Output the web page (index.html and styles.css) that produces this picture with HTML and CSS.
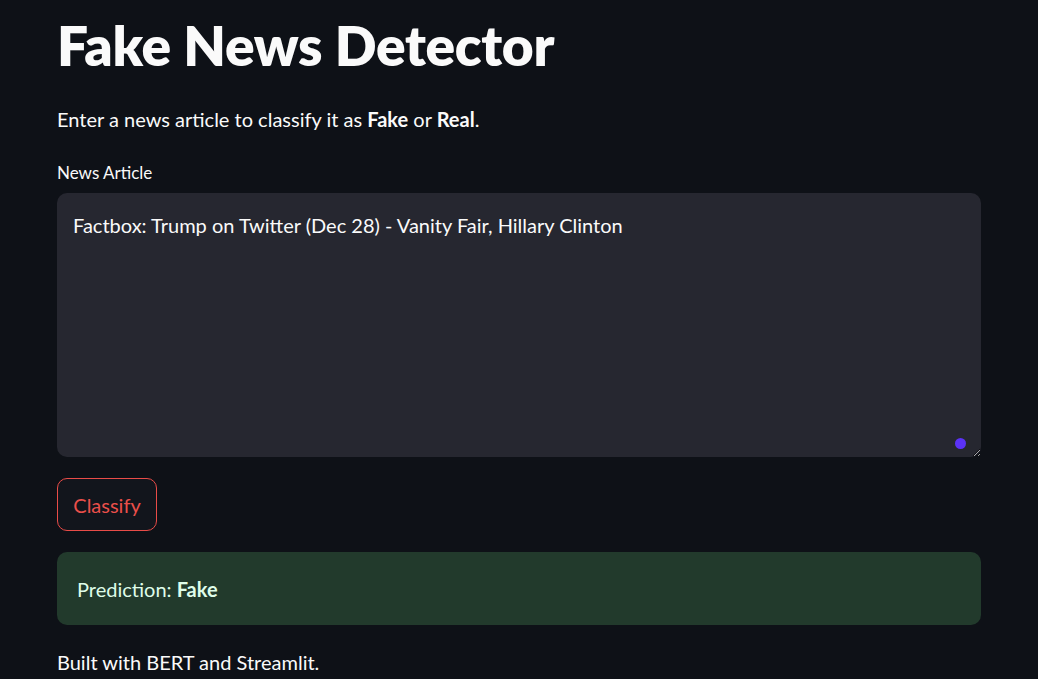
FILE: index.html
```html
<!DOCTYPE html>
<html lang="en">
<head>
<meta charset="utf-8">
<title>Fake News Detector</title>
<link rel="stylesheet" href="styles.css">
</head>
<body>
<main class="main">
  <h1 class="title">Fake News Detector</h1>
  <p class="intro">Enter a news article to classify it as <strong>Fake</strong> or <strong>Real</strong>.</p>
  <label class="label" for="article">News Article</label>
  <div class="area-wrap">
    <textarea id="article" class="area">Factbox: Trump on Twitter (Dec 28) - Vanity Fair, Hillary Clinton</textarea>
    <span class="dot"></span>
  </div>
  <button class="btn" type="button">Classify</button>
  <div class="alert">Prediction: <strong>Fake</strong></div>
  <p class="footer">Built with BERT and Streamlit.</p>
</main>
</body>
</html>
```
FILE: styles.css
```css
html, body {
  margin: 0;
  padding: 0;
  background: #0e1117;
  color: #fafafa;
  font-family: Lato, "Noto Sans", sans-serif;
  overflow: hidden;
  color-scheme: dark;
}
.main {
  width: 924px;
  margin-left: 57px;
  display: flex;
  flex-direction: column;
  align-items: flex-start;
}
.title {
  margin: 0;
  padding-top: 10px;
  font-size: 55px;
  line-height: 70px;
  font-weight: 800;
  letter-spacing: -0.3px;
}
.intro {
  margin: 23px 0 0;
  font-size: 20px;
  line-height: 32px;
}
.intro strong { font-weight: 700; }
.label {
  margin-top: 26px;
  font-size: 17px;
  line-height: 24px;
}
.area-wrap {
  position: relative;
  margin-top: 8px;
  width: 924px;
  height: 264px;
}
.area {
  box-sizing: border-box;
  width: 924px;
  height: 264px;
  border: none;
  outline: none;
  border-radius: 10px;
  background: #262730;
  color: #fafafa;
  padding: 17px 16px;
  font-family: inherit;
  font-size: 20px;
  line-height: 30px;
  resize: vertical;
  display: block;
}
.dot {
  position: absolute;
  right: 15px;
  bottom: 8px;
  width: 11px;
  height: 11px;
  border-radius: 50%;
  background: #5b32f6;
}
.btn {
  margin-top: 21px;
  box-sizing: border-box;
  width: 100px;
  height: 53px;
  border: 1px solid #e84c48;
  border-radius: 10px;
  background: #12151c;
  color: #ea4f4a;
  font-family: inherit;
  font-size: 20px;
}
.alert {
  box-sizing: border-box;
  margin-top: 21px;
  width: 924px;
  height: 73px;
  border-radius: 10px;
  background: #223a2c;
  color: #dffde9;
  padding: 0 20px;
  font-size: 20px;
  display: flex;
  align-items: center;
}
.alert strong { font-weight: 700; margin-left: 5px; }
.footer {
  margin: 21px 0 0;
  font-size: 20px;
  line-height: 32px;
}
```
